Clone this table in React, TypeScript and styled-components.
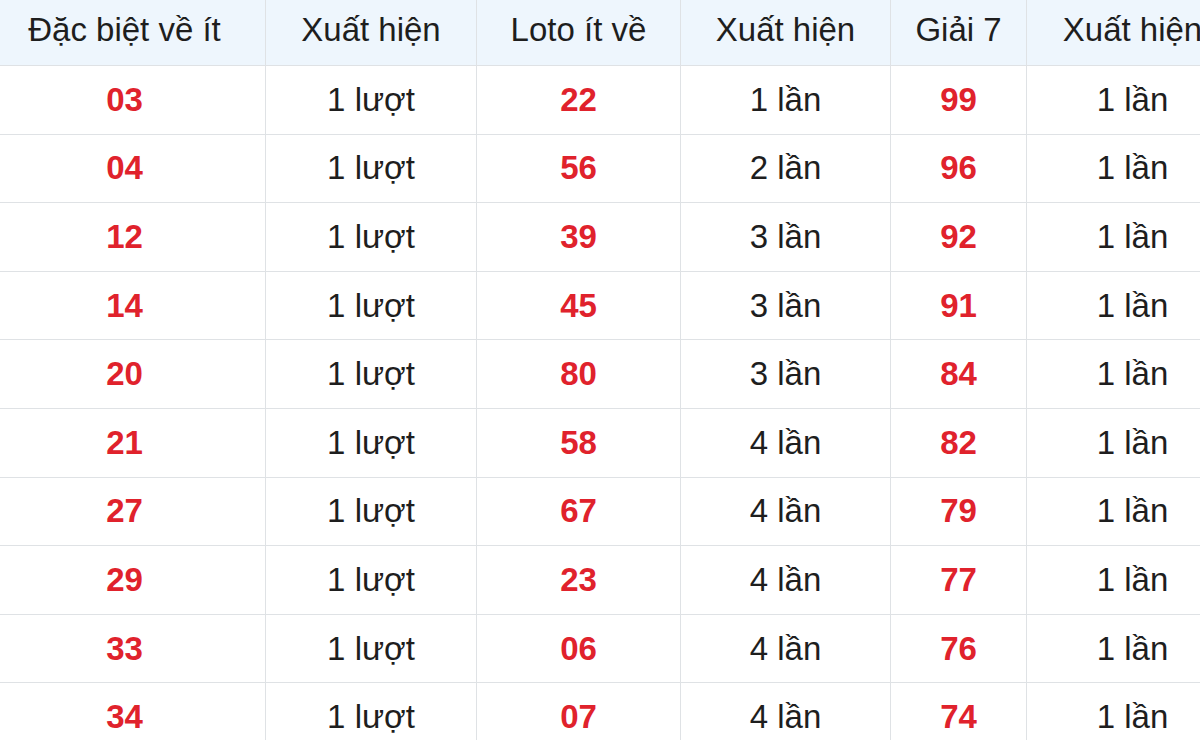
import styled, { createGlobalStyle } from 'styled-components';

const GlobalStyle = createGlobalStyle`
  html, body {
    margin: 0;
    padding: 0;
    background: #ffffff;
    overflow: hidden;
  }
  body {
    font-family: 'Liberation Sans', Arial, sans-serif;
  }
`;

type Row = {
  special: string;
  specialCount: string;
  loto: string;
  lotoCount: string;
  prize: string;
  prizeCount: string;
};

const rows: Row[] = [
  { special: '03', specialCount: '1 lượt', loto: '22', lotoCount: '1 lần', prize: '99', prizeCount: '1 lần' },
  { special: '04', specialCount: '1 lượt', loto: '56', lotoCount: '2 lần', prize: '96', prizeCount: '1 lần' },
  { special: '12', specialCount: '1 lượt', loto: '39', lotoCount: '3 lần', prize: '92', prizeCount: '1 lần' },
  { special: '14', specialCount: '1 lượt', loto: '45', lotoCount: '3 lần', prize: '91', prizeCount: '1 lần' },
  { special: '20', specialCount: '1 lượt', loto: '80', lotoCount: '3 lần', prize: '84', prizeCount: '1 lần' },
  { special: '21', specialCount: '1 lượt', loto: '58', lotoCount: '4 lần', prize: '82', prizeCount: '1 lần' },
  { special: '27', specialCount: '1 lượt', loto: '67', lotoCount: '4 lần', prize: '79', prizeCount: '1 lần' },
  { special: '29', specialCount: '1 lượt', loto: '23', lotoCount: '4 lần', prize: '77', prizeCount: '1 lần' },
  { special: '33', specialCount: '1 lượt', loto: '06', lotoCount: '4 lần', prize: '76', prizeCount: '1 lần' },
  { special: '34', specialCount: '1 lượt', loto: '07', lotoCount: '4 lần', prize: '74', prizeCount: '1 lần' },
];

const headers = ['Đặc biệt về ít', 'Xuất hiện', 'Loto ít về', 'Xuất hiện', 'Giải 7', 'Xuất hiện'];
const colWidths = [282, 211, 204, 210, 136, 212];

const App = () => {
  return (
    <>
      <GlobalStyle />
      <Wrapper>
        <Table>
          <colgroup>
            {colWidths.map((w, i) => (
              <col key={i} style={{ width: w }} />
            ))}
          </colgroup>
          <thead>
            <tr>
              {headers.map((h, i) => (
                <HeadCell key={i}>{h}</HeadCell>
              ))}
            </tr>
          </thead>
          <tbody>
            {rows.map((r) => (
              <tr key={r.special}>
                <NumberCell>{r.special}</NumberCell>
                <Cell>{r.specialCount}</Cell>
                <NumberCell>{r.loto}</NumberCell>
                <Cell>{r.lotoCount}</Cell>
                <NumberCell>{r.prize}</NumberCell>
                <Cell>{r.prizeCount}</Cell>
              </tr>
            ))}
          </tbody>
        </Table>
      </Wrapper>
    </>
  );
};

export default App;

const Wrapper = styled.div`
  width: 1200px;
  height: 740px;
  overflow: hidden;
`;

const Table = styled.table`
  margin-left: -17px;
  width: 1255px;
  table-layout: fixed;
  border-collapse: collapse;
  font-family: 'Liberation Sans', Arial, sans-serif;
`;

const HeadCell = styled.th`
  height: 59px;
  padding: 0 0 6px;
  background-color: #eef6fd;
  border: 1px solid #dfe2e5;
  border-top: none;
  font-size: 33px;
  font-weight: 400;
  color: #1e1e1e;
  text-align: center;
  white-space: nowrap;
`;

const Cell = styled.td`
  height: 67.6px;
  padding: 0;
  border: 1px solid #dfe2e5;
  font-size: 33px;
  color: #1e1e1e;
  text-align: center;
  white-space: nowrap;
`;

const NumberCell = styled(Cell)`
  font-weight: 700;
  color: #e0222c;
`;
